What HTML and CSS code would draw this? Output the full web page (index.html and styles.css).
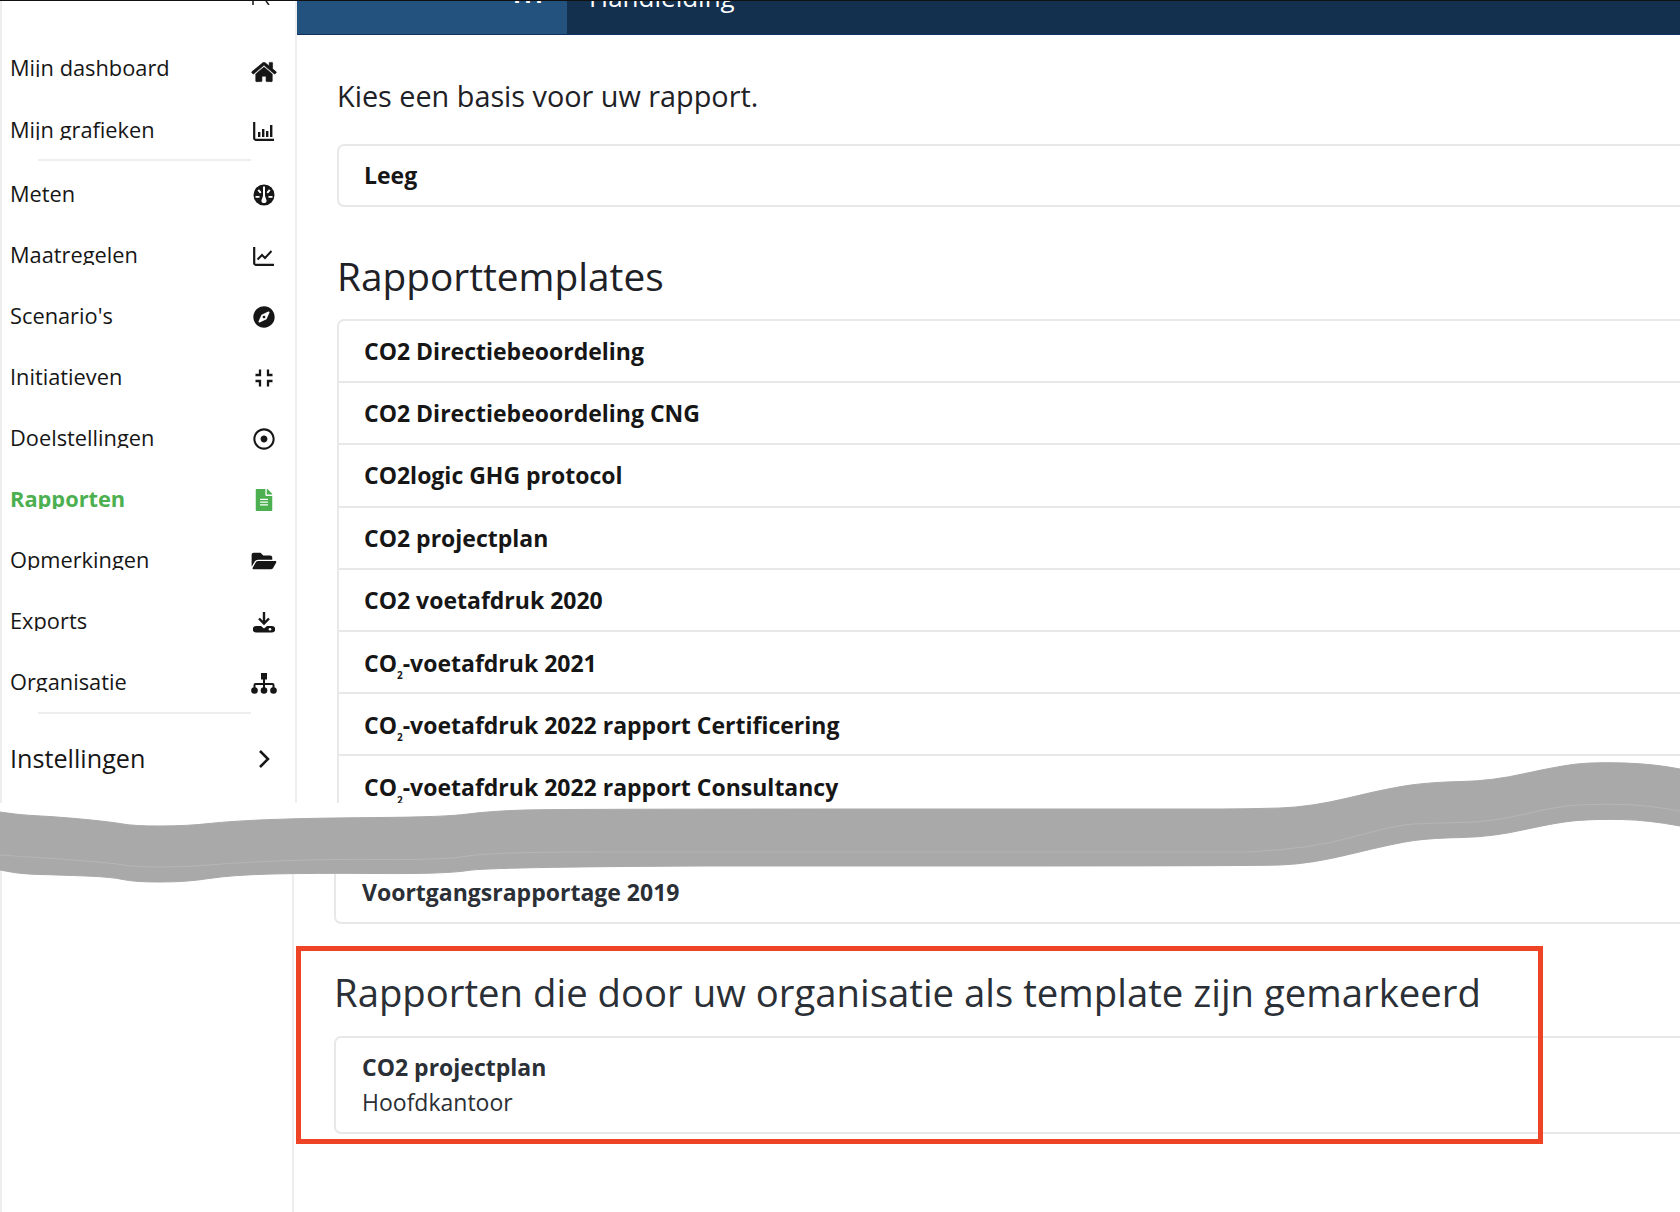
FILE: index.html
```html
<!DOCTYPE html>
<html lang="nl">
<head>
<meta charset="utf-8">
<title>Rapporten</title>
<link rel="stylesheet" href="styles.css">
</head>
<body>
<div class="topline"></div>
<div class="upper">
  <aside class="sidebar">
    <svg class="remnant" viewBox="0 0 20 4"><path d="M1 0v4M14 0l3 4" fill="none" stroke="#222" stroke-width="1.6"/></svg>
    <nav class="nav">
      <a class="nav-item first"><span class="label">Mijn dashboard</span>
        <svg class="icon wide solid" viewBox="0 0 576 512"><path d="M280.37 148.26L96 300.11V464a16 16 0 0 0 16 16l112.06-.29a16 16 0 0 0 15.92-16V368a16 16 0 0 1 16-16h64a16 16 0 0 1 16 16v95.64a16 16 0 0 0 16 16.05L464 480a16 16 0 0 0 16-16V300L295.67 148.26a12.19 12.19 0 0 0-15.3 0zM571.6 251.47L488 182.56V44.05a12 12 0 0 0-12-12h-56a12 12 0 0 0-12 12v72.61L318.47 43a48 48 0 0 0-61 0L4.34 251.47a12 12 0 0 0-1.6 16.9l25.5 31A12 12 0 0 0 45.15 301l235.22-193.74a12.19 12.19 0 0 1 15.3 0L530.9 301a12 12 0 0 0 16.9-1.6l25.5-31a12 12 0 0 0-1.7-16.93z"/></svg></a>
      <a class="nav-item"><span class="label">Mijn grafieken</span>
        <svg class="icon" viewBox="0 0 22 22"><path d="M1.2 2v16.200a1.600 1.600 0 0 0 1.600 1.600H21" fill="none" stroke="currentColor" stroke-width="2.200"/><path d="M5 12h2.400v5H5zM9 9h2.400v8H9zM13 11h2.400v6H13zM17 5h2.400v12H17z"/></svg></a>
      <div class="rule"></div>
      <a class="nav-item"><span class="label">Meten</span>
        <svg class="icon" viewBox="0 0 22 22"><circle cx="11" cy="11" r="10.500"/><path d="M10 2.500h2v9.500l1.600 4.500a2.600 2.600 0 1 1-5.200 0L10 12zM4.500 6.500l1.500-1.300 2.500 3-1.500 1.300zM17.500 6.500L16 5.200l-2.500 3 1.500 1.300zM2.500 12h4v1.800h-4zM15.500 12h4v1.800h-4z" fill="#fff"/></svg></a>
      <a class="nav-item"><span class="label">Maatregelen</span>
        <svg class="icon" viewBox="0 0 22 22"><path d="M1.200 2v16.200a1.600 1.600 0 0 0 1.600 1.600H21" fill="none" stroke="currentColor" stroke-width="2.200"/><path d="M4.500 14.500l4.500-4.500 3 3 6.500-7" fill="none" stroke="currentColor" stroke-width="2"/></svg></a>
      <a class="nav-item"><span class="label">Scenario's</span>
        <svg class="icon" viewBox="0 0 496 512"><path d="M225.38 233.37c-12.5 12.5-12.5 32.76 0 45.25 12.49 12.5 32.76 12.5 45.25 0 12.5-12.5 12.5-32.76 0-45.25-12.5-12.49-32.76-12.49-45.25 0zM248 8C111.03 8 0 119.03 0 256s111.03 248 248 248 248-111.03 248-248S384.97 8 248 8zm126.14 148.05L308.17 300.4a31.938 31.938 0 0 1-15.77 15.77l-144.34 65.97c-16.65 7.61-33.81-9.55-26.2-26.2l65.98-144.35a31.938 31.938 0 0 1 15.77-15.77l144.34-65.97c16.65-7.6 33.8 9.55 26.19 26.2z"/></svg></a>
      <a class="nav-item"><span class="label">Initiatieven</span>
        <svg class="icon" viewBox="0 0 22 22"><path d="M7 2.500v5.500H2.500M15 2.500v5.500H19.500M7 19.500v-5.500H2.500M15 19.500v-5.500H19.500" fill="none" stroke="currentColor" stroke-width="2.300"/></svg></a>
      <a class="nav-item"><span class="label">Doelstellingen</span>
        <svg class="icon" viewBox="0 0 512 512"><path d="M256 56c110.532 0 200 89.451 200 200 0 110.532-89.451 200-200 200-110.532 0-200-89.451-200-200 0-110.532 89.451-200 200-200m0-48C119.033 8 8 119.033 8 256s111.033 248 248 248 248-111.033 248-248S392.967 8 256 8zm0 168c-44.183 0-80 35.817-80 80s35.817 80 80 80 80-35.817 80-80-35.817-80-80-80z"/></svg></a>
      <a class="nav-item active"><span class="label">Rapporten</span>
        <svg class="icon" viewBox="0 0 384 512"><path d="M224 136V0H24C10.700 0 0 10.700 0 24v464c0 13.300 10.700 24 24 24h336c13.300 0 24-10.700 24-24V160H248c-13.200 0-24-10.800-24-24zm64 236c0 6.600-5.400 12-12 12H108c-6.600 0-12-5.400-12-12v-8c0-6.600 5.400-12 12-12h168c6.600 0 12 5.400 12 12v8zm0-64c0 6.600-5.400 12-12 12H108c-6.600 0-12-5.400-12-12v-8c0-6.600 5.400-12 12-12h168c6.600 0 12 5.400 12 12v8zm0-72v8c0 6.600-5.400 12-12 12H108c-6.600 0-12-5.400-12-12v-8c0-6.600 5.400-12 12-12h168c6.600 0 12 5.400 12 12zm96-114.100v6.100H256V0h6.100c6.400 0 12.500 2.500 17 7l97.900 98c4.500 4.500 7 10.600 7 16.900z"/></svg></a>
      <a class="nav-item"><span class="label">Opmerkingen</span>
        <svg class="icon wide" viewBox="0 0 576 512"><path d="M572.694 292.093L500.27 416.248A63.997 63.997 0 0 1 444.989 448H45.025c-18.523 0-30.064-20.093-20.731-36.093l72.424-124.155A64 64 0 0 1 152 256h399.964c18.523 0 30.064 20.093 20.73 36.093zM152 224h328v-48c0-26.51-21.49-48-48-48H272l-64-64H48C21.49 64 0 85.49 0 112v278.046l69.077-118.418C86.214 242.25 117.989 224 152 224z"/></svg></a>
      <a class="nav-item"><span class="label">Exports</span>
        <svg class="icon" viewBox="0 0 22 22"><path d="M11 1v11M6 7.500l5 5 5-5" fill="none" stroke="currentColor" stroke-width="2.400"/><path d="M3 15h5l3 2.500 3-2.500h5a2.800 2.800 0 0 1 0 6.500H3A2.800 2.800 0 0 1 3 15z"/><circle cx="17" cy="18.200" r="1.300" fill="#fff"/></svg></a>
      <a class="nav-item"><span class="label">Organisatie</span>
        <svg class="icon wide" viewBox="0 0 26 22"><path d="M10 1h6v6.500h-6zM12 7h2v4h7.500a2 2 0 0 1 2 2v3h-2v-3H14v3h-2v-3H4.500v3h-2v-3a2 2 0 0 1 2-2H12z"/><circle cx="3.500" cy="18.500" r="3.300"/><circle cx="13" cy="18.500" r="3.300"/><circle cx="22.500" cy="18.500" r="3.300"/></svg></a>
      <div class="rule rule-end"></div>
      <a class="nav-item settings"><span class="label">Instellingen</span>
        <svg class="chevron" viewBox="0 0 12 20"><path d="M2 2l8 8-8 8" fill="none" stroke="currentColor" stroke-width="2.500"/></svg></a>
    </nav>
  </aside>
  <main class="content">
    <header class="topbar">
      <div class="topbar-blue"><span class="topbar-mark">III</span></div>
      <div class="topbar-dark"><span class="topbar-link">Handleiding</span></div>
    </header>
    <section class="pane">
      <p class="intro">Kies een basis voor uw rapport.</p>
      <div class="card single"><div class="row">Leeg</div></div>
      <h2 class="title">Rapporttemplates</h2>
      <div class="card list">
        <div class="row">CO2 Directiebeoordeling</div>
        <div class="row">CO2 Directiebeoordeling CNG</div>
        <div class="row">CO2logic GHG protocol</div>
        <div class="row">CO2 projectplan</div>
        <div class="row">CO2 voetafdruk 2020</div>
        <div class="row with-sub">CO<sub>2</sub>-voetafdruk 2021</div>
        <div class="row with-sub">CO<sub>2</sub>-voetafdruk 2022 rapport Certificering</div>
        <div class="row with-sub">CO<sub>2</sub>-voetafdruk 2022 rapport Consultancy</div>
      </div>
    </section>
  </main>
</div>
<div class="spacer"></div>
<div class="lower">
  <aside class="sidebar-rest"></aside>
  <section class="pane-rest">
    <div class="card tail"><div class="row">Voortgangsrapportage 2019</div></div>
    <h2 class="title-org">Rapporten die door uw organisatie als template zijn gemarkeerd</h2>
    <div class="card org">
      <div class="org-name">CO2 projectplan</div>
      <div class="org-place">Hoofdkantoor</div>
    </div>
  </section>
</div>
<svg class="scribble" viewBox="0 0 1680 1212">
  <path class="scribble-fill" d="M0 812L11 813.500Q22 815 41 816Q60 817 86 819.500Q112 822 123 824Q134 826 160 826Q187 826 209 823.500Q232 821 272 819.500Q312 818 379 817.500Q446 817 468 814Q491 811 525 810Q560 809 904 809L1220 809Q1248 809 1280 808Q1311 807 1350 797.500Q1389 788 1411 785Q1433 782 1462 781.500Q1492 781 1525 773.500Q1559 766 1577 764Q1596 762 1625 763Q1655 764 1680 769L1680 826Q1648 820 1622 819.500Q1596 819 1577 820.500Q1559 822 1525 829.500Q1492 837 1462 837.500Q1433 838 1414 840.500Q1396 843 1353 853.500Q1311 864 1280 865Q1248 866 974 866L700 866Q491 867 468 870.500Q446 874 379 873.500Q312 873 272 874Q232 875 209 878.500Q187 882 160 882Q134 882 123 879.500Q112 877 86 876Q60 875 41 874.500Q22 874 11 872L0 870Z"/>
  <path class="scribble-seam" d="M0 855L30 857Q60 859 86 861Q112 863 123 865Q134 867 160 867Q187 867 209 865Q232 863 276 861Q321 859 383 859.500Q446 860 468 856Q491 852 595 852L1248 852Q1311 849 1353 837Q1396 825 1414 824Q1433 823 1462 822.500Q1492 822 1525 814Q1559 806 1577 805Q1596 804 1622 804.500Q1648 805 1680 811"/>
</svg>
<div class="marker"></div>
</body>
</html>
```
FILE: styles.css
```css
* { box-sizing: border-box; }
html, body { margin: 0; padding: 0; }
body {
  position: relative;
  width: 1680px;
  height: 1212px;
  overflow: hidden;
  background: #fff;
  color: #161616;
  font-family: "Open Sans", "Noto Sans", sans-serif;
}
.topline { height: 1px; background: #111; }
.upper { display: flex; height: 802px; overflow: hidden; }
.sidebar {
  flex: 0 0 297px;
  border-left: 2px solid #eee;
  border-right: 2px solid #eee;
}
.remnant { display: block; width: 20px; height: 4px; margin-left: 250px; }
.nav { padding: 29px 0 0; }
.nav-item {
  display: flex;
  align-items: center;
  justify-content: space-between;
  height: 61px;
  padding: 0 20px 0 8px;
}
.nav-item.first { height: 60px; margin-bottom: 2px; }
.label {
  display: block;
  height: 24.500px;
  margin-top: 2px;
  overflow: hidden;
  font-size: 21.800px;
  line-height: 30px;
}
.icon { width: 22px; height: 22px; margin-top: 8px; fill: currentColor; }
.icon.wide { width: 26px; margin-right: -2px; }
.nav-item.first .icon { margin-top: 16px; }
.icon.solid { stroke: currentColor; stroke-width: 14; }
.rule { height: 2px; margin: 2px 44px -1px 36px; background: #eee; }
.rule-end { margin: 3px 44px 0 36px; }
.nav-item.active { color: #4caf50; }
.nav-item.active .label { font-weight: 700; }
.settings { margin-top: 14px; }
.settings .label { height: 34px; margin: 0 0 2px; font-size: 25.200px; line-height: 34px; }
.chevron { width: 12px; height: 20px; margin-right: 5px; }

.content { flex: 1; min-width: 0; overflow: hidden; }
.topbar { display: flex; height: 34px; overflow: hidden; color: #fff; border-bottom: 1px solid #10305f; }
.topbar-blue { flex: 0 0 270px; padding-left: 216px; background: #24527f; }
.topbar-dark { flex: 1; padding-left: 22px; background: #13304f; }
.topbar-mark { display: block; margin-top: -22px; font-size: 24px; line-height: 30px; font-weight: 700; letter-spacing: 3px; }
.topbar-link { display: block; margin-top: -19px; font-size: 26px; line-height: 30px; }
.pane { padding: 43px 0 0 40px; }
.intro { margin: 0; font-size: 28.800px; line-height: 36px; color: #1e2126; }
.card {
  margin-right: -20px;
  border: 2px solid #e8e8e8;
  border-radius: 7px 0 0 7px;
  background: #fff;
}
.single { margin-top: 30px; height: 63px; }
.row {
  display: flex;
  align-items: center;
  height: 59px;
  padding-left: 25px;
  font-size: 23px;
  font-weight: 700;
  white-space: pre;
}
.single .row { padding-bottom: 2px; }
.row sub { align-self: flex-end; margin-bottom: 12px; font-size: 10px; line-height: 10px; }
.title { margin: 0; padding-top: 44px; height: 112px; font-size: 38.800px; line-height: 50px; font-weight: 400; color: #1e2126; }
.list { border-bottom: 0; border-radius: 7px 0 0 0; }
.list .row { height: 62.200px; border-top: 2px solid #e8e8e8; }
.list .row:first-child { height: 60.200px; border-top: 0; }
.list .row.with-sub { padding-top: 2px; }

.spacer { height: 57px; }
.lower { display: flex; height: 352px; }
.sidebar-rest { flex: 0 0 294px; border-left: 2px solid #eee; border-right: 2px solid #eee; }
.pane-rest { flex: 1; min-width: 0; padding-left: 40px; overflow: hidden; color: #2b2f36; }
.tail { height: 64px; border-top: 0; border-radius: 0 0 0 7px; }
.tail .row { height: 62px; padding-top: 2px; padding-left: 26px; }
.title-org { margin: 0; padding-top: 43px; height: 112px; font-size: 38.300px; line-height: 50px; font-weight: 400; white-space: nowrap; }
.org { height: 98px; padding: 12px 0 0 26px; }
.org-name { font-size: 23px; line-height: 34px; font-weight: 700; }
.org-place { padding-top: 1px; font-size: 23px; line-height: 35px; }

.scribble { position: absolute; left: 0; top: 0; width: 1680px; height: 1212px; pointer-events: none; }
.scribble-fill { fill: #a9a9a9; stroke: #a9a9a9; stroke-width: 1; stroke-linejoin: round; }
.scribble-seam { fill: none; stroke: #bdbdbd; stroke-width: 0.6; }
.marker { position: absolute; left: 296px; top: 946px; width: 1247px; height: 198px; border: 5px solid #ee4325; }
```
